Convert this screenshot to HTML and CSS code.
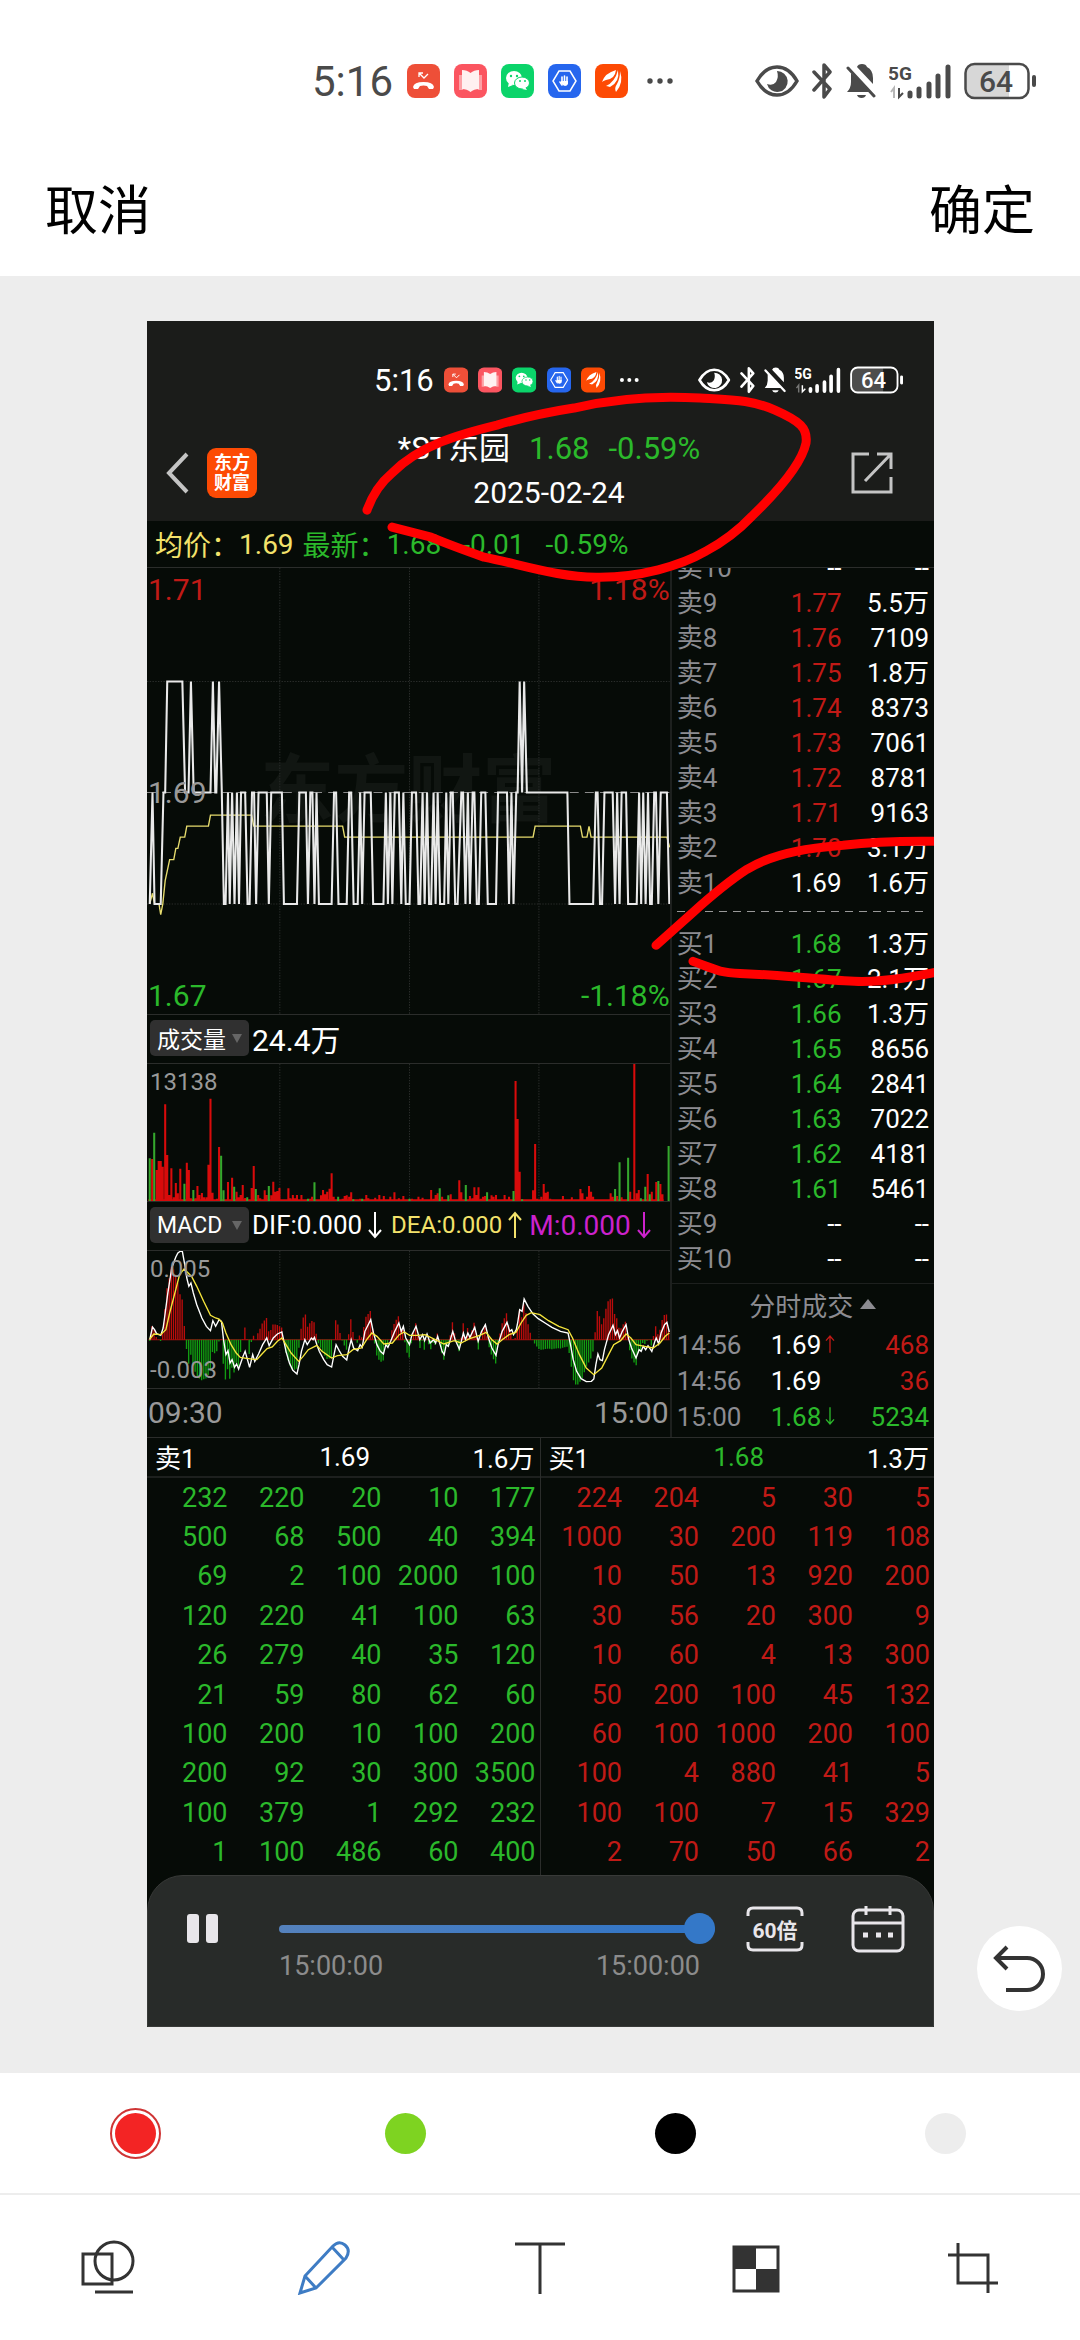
FILE: index.html
```html
<!DOCTYPE html>
<html lang="zh-CN">
<head>
  <meta charset="UTF-8">
  <meta name="viewport" content="width=device-width, initial-scale=1.0">
  <title>编辑图片</title>
  <link rel="stylesheet" href="styles.css">
</head>
<body>
  <!-- shared icons -->
  <svg class="sprite" aria-hidden="true">
    <symbol id="i-call" viewBox="0 0 33 38">
      <rect y="2" width="33" height="34" rx="8" fill="#ee4f38"/>
      <path d="M6 25q1-5 10.500-5T27 25l-1 2h-4l-2-3q-3.500-1-7 0l-2 3H7z" fill="#fff"/>
      <path d="M12 15v-4h4M12 11l5 5 4-4" fill="none" stroke="#fff" stroke-width="1.300"/>
    </symbol>
    <symbol id="i-book" viewBox="0 0 33 38">
      <rect y="2" width="33" height="34" rx="8" fill="#fb5560"/>
      <path d="M5 13h4v15H5zM24 13h4v15h-4z" fill="#fda0a5"/>
      <path d="M8 8q5 0 8.500 3Q20 8 25 8v19q-5 0-8.500 3Q13 27 8 27z" fill="#fff0f0"/>
    </symbol>
    <symbol id="i-wechat" viewBox="0 0 33 38">
      <rect y="2" width="33" height="34" rx="8" fill="#0bd46a"/>
      <ellipse cx="13" cy="16" rx="8" ry="7" fill="#fff"/>
      <path d="M8 20l-1 5 5-2z" fill="#fff"/>
      <ellipse cx="21" cy="21" rx="7.500" ry="6" fill="#fff" stroke="#0bd46a"/>
      <path d="M24 25l2 3-5-1z" fill="#fff"/>
      <g fill="#0bd46a"><circle cx="10" cy="14" r="1.200"/><circle cx="16" cy="14" r="1.200"/><circle cx="19" cy="19" r="1"/><circle cx="24" cy="19" r="1"/></g>
    </symbol>
    <symbol id="i-hand" viewBox="0 0 33 38">
      <rect y="2" width="33" height="34" rx="8" fill="#2666ee"/>
      <path d="M11 9h11l6 10-6 10H11L5 19z" fill="none" stroke="#fff" stroke-width="1.500"/>
      <path d="M14 20v-5M16.500 20v-6M19 20v-5M12 20l2 3" fill="none" stroke="#fff" stroke-width="1.600" stroke-linecap="round"/>
      <path d="M13 19h7v3q-1 2-3 2t-4-3z" fill="#fff"/>
    </symbol>
    <symbol id="i-wing" viewBox="0 0 33 38">
      <rect y="2" width="33" height="34" rx="8" fill="#fd4a04"/>
      <path d="M7 20q3-9 14-12-1 9-10 10-3 1-4 2zM11 24q9-4 12-16 2 12-8 17-3-1-4-1zM21 30q-2-4 1-8 3-5 3-13 4 12-4 21z" fill="#fff"/>
    </symbol>
    <symbol id="i-more" viewBox="0 0 28 38">
      <g fill="currentColor"><circle cx="4" cy="19" r="2.700"/><circle cx="14" cy="19" r="2.700"/><circle cx="24" cy="19" r="2.700"/></g>
    </symbol>
    <symbol id="i-eye" viewBox="0 0 44 38">
      <path d="M2 19Q10 5 22 5t20 14Q34 33 22 33T2 19z" fill="none" stroke="currentColor" stroke-width="3.500"/>
      <path d="M22 9a10.500 10.500 0 1 1-10 13q6 2 9-2 3-5 1-11z" fill="currentColor"/>
    </symbol>
    <symbol id="i-bt" viewBox="0 0 21 38">
      <path d="M2 10l16 17-6 8V3l6 7L2 28" fill="none" stroke="currentColor" stroke-width="3.500" stroke-linejoin="round" stroke-linecap="round"/>
    </symbol>
    <symbol id="i-mute" viewBox="0 0 30 38">
      <path d="M5 11l19 19H1q4-4 4-10zM11 5q1-3 5-3t5 3q6 3 6 11v6z" fill="currentColor"/>
      <path d="M2 6l26 28" stroke="currentColor" stroke-width="3" stroke-linecap="round"/>
      <path d="M11 33h9q-1 3-4.500 3T11 33z" fill="currentColor"/>
    </symbol>
    <symbol id="i-signal" viewBox="0 0 62 38">
      <text x="-1" y="18" font-family="Roboto" font-size="19" font-weight="700" fill="currentColor">5G</text>
      <path d="M21 31v3M30 27v7M40 22v12M49 14v20M59 5v29" stroke="currentColor" stroke-width="5" stroke-linecap="round"/>
      <path d="M2 30l3-4v10" fill="none" stroke="currentColor" stroke-width="2" opacity=".4"/>
      <path d="M10 26v9l4-4" fill="none" stroke="currentColor" stroke-width="2"/>
    </symbol>
    <symbol id="i-battery" viewBox="0 0 72 38">
      <path d="M10 2h35v34H10q-8 0-8-8V10q0-8 8-8z" fill="currentColor" opacity=".22"/>
      <rect x="1.500" y="2" width="63" height="34" rx="9" fill="none" stroke="currentColor" stroke-width="2.500"/>
      <path d="M70 15v8" stroke="currentColor" stroke-width="4" stroke-linecap="round"/>
      <text x="32" y="30" text-anchor="middle" font-family="Roboto" font-size="30" font-weight="500" fill="currentColor">64</text>
    </symbol>
    <symbol id="i-down" viewBox="0 0 16 30"><path d="M8 2v25M2 20l6 7 6-7" fill="none" stroke="currentColor" stroke-width="2"/></symbol>
    <symbol id="i-up" viewBox="0 0 16 30"><path d="M8 28V3M2 10l6-7 6 7" fill="none" stroke="currentColor" stroke-width="2"/></symbol>
  </svg>

  <header class="top">
    <div class="status">
      <div class="status-left">
        <span>5:16</span>
        <svg viewBox="0 0 33 38"><use href="#i-call"/></svg>
        <svg viewBox="0 0 33 38"><use href="#i-book"/></svg>
        <svg viewBox="0 0 33 38"><use href="#i-wechat"/></svg>
        <svg viewBox="0 0 33 38"><use href="#i-hand"/></svg>
        <svg viewBox="0 0 33 38"><use href="#i-wing"/></svg>
        <svg class="more" viewBox="0 0 28 38"><use href="#i-more"/></svg>
      </div>
      <div class="status-right">
        <svg viewBox="0 0 44 38"><use href="#i-eye"/></svg>
        <svg viewBox="0 0 21 38"><use href="#i-bt"/></svg>
        <svg viewBox="0 0 30 38"><use href="#i-mute"/></svg>
        <svg viewBox="0 0 62 38"><use href="#i-signal"/></svg>
        <svg viewBox="0 0 72 38"><use href="#i-battery"/></svg>
      </div>
    </div>
    <div class="actions">
      <button type="button">取消</button>
      <button type="button">确定</button>
    </div>
  </header>

  <main class="editor">
    <div class="shot">
      <div class="shot-head">
        <div class="status small">
          <div class="status-left">
            <span>5:16</span>
            <svg viewBox="0 0 33 38"><use href="#i-call"/></svg>
            <svg viewBox="0 0 33 38"><use href="#i-book"/></svg>
            <svg viewBox="0 0 33 38"><use href="#i-wechat"/></svg>
            <svg viewBox="0 0 33 38"><use href="#i-hand"/></svg>
            <svg viewBox="0 0 33 38"><use href="#i-wing"/></svg>
            <svg class="more" viewBox="0 0 28 38"><use href="#i-more"/></svg>
          </div>
          <div class="status-right">
            <svg viewBox="0 0 44 38"><use href="#i-eye"/></svg>
            <svg viewBox="0 0 21 38"><use href="#i-bt"/></svg>
            <svg viewBox="0 0 30 38"><use href="#i-mute"/></svg>
            <svg viewBox="0 0 62 38"><use href="#i-signal"/></svg>
            <svg viewBox="0 0 72 38"><use href="#i-battery"/></svg>
          </div>
        </div>
        <div class="title-bar">
          <button type="button" class="back" aria-label="返回">
            <svg width="24" height="42" viewBox="0 0 24 42"><path d="M21 2L3 21l18 19" fill="none" stroke="#c4c4c4" stroke-width="4"/></svg>
          </button>
          <div class="brand">东方<br>财富</div>
          <div class="stock">
            <div class="stock-name"><span>*ST东园</span><span class="green">1.68</span><span class="green">-0.59%</span></div>
            <div class="stock-date">2025-02-24</div>
          </div>
          <button type="button" class="share" aria-label="分享">
            <svg width="44" height="44" viewBox="0 0 44 44"><path d="M19 3H3v38h38V26M27 3h14v15M41 3L15 30" fill="none" stroke="#c4c4c4" stroke-width="3"/></svg>
          </button>
        </div>
      </div>

      <div class="summary">
        <span class="yellow">均价：</span><span class="yellow avg">1.69</span>
        <span class="green">最新：</span><span class="green now">1.68</span>
        <span class="green chg">-0.01</span><span class="green">-0.59%</span>
      </div>

      <div class="quote">
        <div class="charts">
          <div class="chart price">
            <span class="watermark">东方财富</span>
            <svg viewBox="20 20 1523 1341" preserveAspectRatio="none">
              <path class="grid" d="M407 20V1361M785 20V1361M1162 20V1361M20 361H1543M20 1030H1543"/>
              <path d="M20 695H1543" stroke="#8a8a8a" stroke-width="3" stroke-dasharray="26 18"/>
              <polyline id="avgLine" fill="none" stroke="#e6dc6e" stroke-width="4"/>
              <polyline id="priceLine" fill="none" stroke="#e9e9e9" stroke-width="6"/>
            </svg>
            <span class="tag top-left red">1.71</span>
            <span class="tag top-right red">1.18%</span>
            <span class="tag mid-left">1.69</span>
            <span class="tag bottom-left green">1.67</span>
            <span class="tag bottom-right green">-1.18%</span>
          </div>
          <div class="index-row">
            <button type="button" class="picker">成交量<i></i></button>
            <span class="total">24.4万</span>
          </div>
          <div class="chart volume">
            <svg viewBox="20 162 1523 411" preserveAspectRatio="none">
              <path class="grid" d="M407 162V573M785 162V573M1162 162V573"/>
              <path d="M24 571H1525" stroke="#d80b0b" stroke-width="6"/>
              <path id="volUp" stroke="#d80b0b" stroke-width="6"/>
              <path id="volDown" stroke="#35a82d" stroke-width="6"/>
            </svg>
            <span class="tag note-top">13138</span>
          </div>
          <div class="index-row">
            <button type="button" class="picker">MACD<i></i></button>
            <span class="dif">DIF:0.000</span><svg class="arrow" viewBox="0 0 16 30"><use href="#i-down"/></svg>
            <span class="dea">DEA:0.000</span><svg class="arrow yellow" viewBox="0 0 16 30"><use href="#i-up"/></svg>
            <span class="m">M:0.000</span><svg class="arrow purple" viewBox="0 0 16 30"><use href="#i-down"/></svg>
          </div>
          <div class="chart macd">
            <svg viewBox="20 719 1523 411" preserveAspectRatio="none">
              <path class="grid" d="M407 719V1130M785 719V1130M1162 719V1130"/>
              <path d="M24 985H1543" stroke="#a01010" stroke-width="3"/>
              <path id="macdUp" stroke="#bb0c0c" stroke-width="4"/>
              <path id="macdDown" stroke="#129c12" stroke-width="4"/>
              <polyline id="difLine" fill="none" stroke="#fff" stroke-width="4"/>
              <polyline id="deaLine" fill="none" stroke="#f5e53c" stroke-width="4"/>
            </svg>
            <span class="tag note-top">0.005</span>
            <span class="tag note-bottom">-0.003</span>
          </div>
          <div class="hours"><span>09:30</span><span>15:00</span></div>
        </div>

        <div class="book">
          <div class="ladder">
            <table>
              <tr><th>卖10</th><td>--</td><td>--</td></tr>
              <tr><th>卖9</th><td class="red">1.77</td><td>5.5万</td></tr>
              <tr><th>卖8</th><td class="red">1.76</td><td>7109</td></tr>
              <tr><th>卖7</th><td class="red">1.75</td><td>1.8万</td></tr>
              <tr><th>卖6</th><td class="red">1.74</td><td>8373</td></tr>
              <tr><th>卖5</th><td class="red">1.73</td><td>7061</td></tr>
              <tr><th>卖4</th><td class="red">1.72</td><td>8781</td></tr>
              <tr><th>卖3</th><td class="red">1.71</td><td>9163</td></tr>
              <tr><th>卖2</th><td class="red">1.70</td><td>3.1万</td></tr>
              <tr><th>卖1</th><td>1.69</td><td>1.6万</td></tr>
            </table>
            <svg class="dash" height="26" width="100%"><path d="M5 10.500H255" stroke="#999" stroke-width="1" stroke-dasharray="8 6"/></svg>
            <table class="buy">
              <tr><th>买1</th><td class="green">1.68</td><td>1.3万</td></tr>
              <tr><th>买2</th><td class="green">1.67</td><td>2.1万</td></tr>
              <tr><th>买3</th><td class="green">1.66</td><td>1.3万</td></tr>
              <tr><th>买4</th><td class="green">1.65</td><td>8656</td></tr>
              <tr><th>买5</th><td class="green">1.64</td><td>2841</td></tr>
              <tr><th>买6</th><td class="green">1.63</td><td>7022</td></tr>
              <tr><th>买7</th><td class="green">1.62</td><td>4181</td></tr>
              <tr><th>买8</th><td class="green">1.61</td><td>5461</td></tr>
              <tr><th>买9</th><td>--</td><td>--</td></tr>
              <tr><th>买10</th><td>--</td><td>--</td></tr>
            </table>
          </div>
          <div class="ticks">
            <button type="button" class="ticks-title">分时成交<i></i></button>
            <table>
              <tr><th>14:56</th><td>1.69<svg class="tick-arrow red" viewBox="0 0 16 30"><use href="#i-up"/></svg></td><td class="red">468</td></tr>
              <tr><th>14:56</th><td>1.69</td><td class="red">36</td></tr>
              <tr><th>15:00</th><td class="green">1.68<svg class="tick-arrow" viewBox="0 0 16 30"><use href="#i-down"/></svg></td><td class="green">5234</td></tr>
            </table>
          </div>
        </div>
      </div>

      <div class="queues">
        <section class="queue">
          <div class="queue-head"><span>卖1</span><span>1.69</span><span>1.6万</span></div>
          <table class="green">
            <tr><td>232</td><td>220</td><td>20</td><td>10</td><td>177</td></tr>
            <tr><td>500</td><td>68</td><td>500</td><td>40</td><td>394</td></tr>
            <tr><td>69</td><td>2</td><td>100</td><td>2000</td><td>100</td></tr>
            <tr><td>120</td><td>220</td><td>41</td><td>100</td><td>63</td></tr>
            <tr><td>26</td><td>279</td><td>40</td><td>35</td><td>120</td></tr>
            <tr><td>21</td><td>59</td><td>80</td><td>62</td><td>60</td></tr>
            <tr><td>100</td><td>200</td><td>10</td><td>100</td><td>200</td></tr>
            <tr><td>200</td><td>92</td><td>30</td><td>300</td><td>3500</td></tr>
            <tr><td>100</td><td>379</td><td>1</td><td>292</td><td>232</td></tr>
            <tr><td>1</td><td>100</td><td>486</td><td>60</td><td>400</td></tr>
          </table>
        </section>
        <section class="queue">
          <div class="queue-head"><span>买1</span><span class="green">1.68</span><span>1.3万</span></div>
          <table class="red">
            <tr><td>224</td><td>204</td><td>5</td><td>30</td><td>5</td></tr>
            <tr><td>1000</td><td>30</td><td>200</td><td>119</td><td>108</td></tr>
            <tr><td>10</td><td>50</td><td>13</td><td>920</td><td>200</td></tr>
            <tr><td>30</td><td>56</td><td>20</td><td>300</td><td>9</td></tr>
            <tr><td>10</td><td>60</td><td>4</td><td>13</td><td>300</td></tr>
            <tr><td>50</td><td>200</td><td>100</td><td>45</td><td>132</td></tr>
            <tr><td>60</td><td>100</td><td>1000</td><td>200</td><td>100</td></tr>
            <tr><td>100</td><td>4</td><td>880</td><td>41</td><td>5</td></tr>
            <tr><td>100</td><td>100</td><td>7</td><td>15</td><td>329</td></tr>
            <tr><td>2</td><td>70</td><td>50</td><td>66</td><td>2</td></tr>
          </table>
        </section>
      </div>

      <div class="player">
        <button type="button" class="pause" aria-label="暂停">
          <svg width="32" height="32" viewBox="0 0 32 32"><rect y="1" width="12" height="29" rx="3" fill="#e8e6ea"/><rect x="19" y="1" width="12" height="29" rx="3" fill="#e8e6ea"/></svg>
        </button>
        <div class="progress">
          <input type="range" min="0" max="100" value="100" aria-label="播放进度">
          <div class="times"><span>15:00:00</span><span>15:00:00</span></div>
        </div>
        <button type="button" class="speed">
          <svg width="58" height="46" viewBox="0 0 58 46"><path d="M2 10V7q0-5 5-5h44q5 0 5 5v3M2 36v3q0 5 5 5h44q5 0 5-5v-3" fill="none" stroke="#e8e6ea" stroke-width="3"/></svg>
          <span>60倍</span>
        </button>
        <button type="button" class="calendar" aria-label="日历">
          <svg width="54" height="48" viewBox="0 0 54 48"><rect x="2" y="5" width="50" height="41" rx="6" fill="none" stroke="#e8e6ea" stroke-width="3"/><path d="M2 18h50M15 1v9M39 1v9" stroke="#e8e6ea" stroke-width="3"/><path d="M12 30h5M25 30h5M37 30h5" stroke="#e8e6ea" stroke-width="5"/></svg>
        </button>
      </div>

      <!-- pen strokes drawn by the user -->
      <svg class="ink" viewBox="147 321 787 1705" preserveAspectRatio="none">
        <path d="M367 510C372 496 380 483 392 473C420 445 460 434 497 425Q535 414 574 408C620 397 665 396 700 398C735 400 752 400 775 410C800 421 808 428 806 443C802 462 782 487 752 516Q732 537 706 551C680 566 640 577 600 577C560 578 520 564 484 557Q450 545 431 537L392 527"/>
        <path d="M656 945L693 912Q724 884 747 869C778 850 820 847 843 845Q885 840 940 841"/>
        <path d="M693 961C715 969 718 972 740 973L777 975C820 978 840 981 862 981C890 981 915 976 940 971"/>
      </svg>
    </div>

    <button type="button" class="undo" aria-label="撤销">
      <svg width="54" height="48" viewBox="0 0 54 48"><path d="M14 2L3 13l11 11M3 13h31a16 16 0 0 1 0 32H13" fill="none" stroke="#333" stroke-width="4"/></svg>
    </button>
  </main>

  <footer class="tools">
    <div class="colors">
      <label class="swatch c-red"><input type="radio" name="color" aria-label="红色" checked></label>
      <label class="swatch c-green"><input type="radio" name="color" aria-label="绿色"></label>
      <label class="swatch c-black"><input type="radio" name="color" aria-label="黑色"></label>
      <label class="swatch c-gray"><input type="radio" name="color" aria-label="灰色"></label>
    </div>
    <div class="modes">
      <button type="button" aria-label="形状">
        <svg viewBox="0 0 56 56"><path d="M3 15h29v30H3z"/><circle cx="34" cy="22" r="19"/><path d="M15 53h38"/></svg>
      </button>
      <button type="button" class="active" aria-label="画笔">
        <svg viewBox="0 0 56 56"><path d="M4 54l5-17L37 7q6-6 12-1t1 13L20 49zM9 37l11 12M36 8l12 13"/></svg>
      </button>
      <button type="button" aria-label="文字">
        <svg viewBox="0 0 56 56"><path d="M3 5h50M28 5v50"/></svg>
      </button>
      <button type="button" aria-label="马赛克">
        <svg viewBox="0 0 56 56"><path d="M6 8h44v44H6z"/><path class="solid" d="M6 8h22v22H6zM28 30h22v22H28z"/></svg>
      </button>
      <button type="button" aria-label="裁剪">
        <svg viewBox="0 0 56 56"><path d="M4 16h40v38M14 4v40h40"/></svg>
      </button>
    </div>
  </footer>

  <script>
    const price = '28,1030 36,695 42,1030 60,1030 68,695 73,695 79,361 123,361 131,695 141,695 148,361 156,695 205,695 212,361 219,695 222,695 230,361 238,695 244,1030 249,1030 256,695 261,1030 268,695 275,1030 282,695 288,1030 294,695 306,695 313,1030 319,1030 326,695 332,695 338,1030 345,695 369,695 375,1030 382,695 413,695 419,1030 457,1030 464,695 483,695 489,1030 496,695 502,695 508,1030 514,695 521,1030 558,1030 565,695 571,695 578,1030 602,1030 609,695 615,695 622,1030 634,1030 641,695 647,1030 654,695 672,695 679,1030 709,1030 716,695 722,1030 729,695 735,1030 742,695 754,695 761,1030 767,695 774,1030 785,1030 792,695 804,695 811,1030 816,1030 823,695 829,1030 836,695 842,1030 848,1030 855,695 861,1030 867,695 874,1030 886,1030 892,695 898,1030 905,695 911,695 918,1030 925,1030 936,695 941,695 948,1030 955,695 961,1030 969,695 974,695 981,1030 987,1030 994,695 1006,695 1013,1030 1037,1030 1043,695 1069,695 1075,1030 1082,695 1088,1030 1096,695 1100,695 1106,361 1113,695 1119,361 1127,695 1245,695 1251,1030 1320,1030 1328,695 1333,695 1340,1030 1346,1030 1353,695 1377,695 1384,1030 1390,695 1397,1030 1403,695 1416,695 1422,1030 1447,1030 1454,695 1460,1030 1466,695 1473,1030 1480,695 1486,1030 1491,1030 1498,695 1503,695 1510,1030 1517,695 1535,695 1542,1030';
    const avg = '28,1030 36,998 42,1030 55,1030 60,1062 66,1030 73,960 86,897 98,897 104,863 110,863 117,829 130,829 136,796 199,796 205,763 325,763 331,796 590,796 596,829 1145,829 1151,796 1283,796 1289,829 1302,829 1308,797 1314,829 1535,829 1543,860';
    const volUp = '35,447 48,480 54,453 60,453 66,470 73,283 79,435 85,555 91,475 98,562 104,519 110,550 117,476 136,458 142,480 148,565 161,565 167,528 173,555 180,549 186,562 193,562 199,464 205,266 211,548 224,566 230,411 256,516 268,503 281,545 287,562 293,555 299,525 306,564 325,534 331,468 344,555 350,565 363,541 369,555 382,556 388,515 394,545 400,543 406,534 432,535 438,565 445,555 451,565 457,555 470,555 495,566 501,560 527,556 533,540 539,553 545,545 552,536 558,490 564,560 590,566 596,558 602,556 609,560 615,547 641,566 659,555 665,565 685,563 697,555 710,558 729,560 741,547 754,565 767,558 792,566 811,560 823,563 848,540 855,566 861,555 867,550 880,560 905,553 930,511 936,547 961,558 968,565 974,532 980,555 986,532 993,566 999,560 1005,558 1024,556 1030,560 1037,555 1062,555 1075,560 1094,213 1100,327 1106,485 1145,541 1151,402 1157,566 1169,560 1176,522 1182,548 1188,545 1195,566 1232,558 1258,562 1283,537 1289,550 1302,560 1308,528 1314,545 1320,560 1371,550 1377,560 1390,558 1403,562 1428,545 1440,162 1447,550 1453,540 1479,492 1491,545 1504,516 1516,522 1522,553';
    const volDown = '28,445 41,368 129,521 155,540 236,437 243,541 274,530 312,562 337,537 375,528 489,566 508,517 577,560 621,568 647,566 785,566 873,535 898,556 949,525 1011,547 1088,543 1113,568 1384,537 1397,457 1422,443 1459,565 1472,530 1485,553 1510,513 1540,408';
    const dif = '28,985 36,947 42,955 48,967 60,972 67,950 73,905 80,850 92,770 104,737 110,725 118,719 123,720 130,760 136,800 142,825 148,815 155,845 165,880 180,920 193,945 205,958 212,928 220,945 230,925 237,930 243,985 250,1030 256,1018 262,1055 268,1045 275,1068 281,1058 287,1073 300,1035 306,1020 319,1068 328,1030 334,1050 345,1028 357,1000 369,980 376,1003 388,980 400,968 413,962 419,990 425,1020 435,1055 445,1077 457,1088 463,1060 470,1020 480,985 487,1000 499,980 504,985 508,978 515,1000 522,1020 535,1045 545,1060 558,1067 565,1030 571,1000 580,1018 590,1035 602,1046 609,1010 615,985 622,1010 634,1018 641,1000 647,1008 655,960 672,925 680,965 690,1000 700,1020 709,1028 716,1000 722,1008 730,990 742,960 754,935 761,960 767,945 774,980 785,1000 792,970 804,945 815,985 823,970 829,988 836,968 845,995 855,985 861,995 867,975 880,1020 886,1030 892,1000 898,1005 911,960 918,985 930,1013 942,965 948,985 955,965 961,978 975,948 985,990 995,960 1006,940 1015,980 1025,1010 1037,1032 1043,1000 1055,960 1069,933 1077,960 1083,955 1088,970 1096,955 1100,935 1106,895 1113,900 1119,863 1130,885 1145,908 1160,922 1180,935 1200,948 1225,960 1247,965 1254,1000 1262,1045 1272,1080 1285,1102 1300,1111 1315,1110 1322,1103 1328,1060 1334,1028 1340,1045 1347,1048 1353,1015 1365,970 1378,942 1385,970 1391,958 1397,980 1405,960 1416,940 1424,985 1432,1010 1445,1040 1454,1015 1460,1020 1466,1005 1473,1015 1480,1003 1491,1020 1500,990 1504,980 1511,998 1518,965 1528,940 1535,933 1542,962';
    const dea = '28,983 40,968 60,970 75,955 86,905 100,850 115,790 128,773 140,785 150,795 165,825 185,870 205,912 220,920 230,923 240,935 250,965 265,1000 280,1025 292,1038 310,1041 340,1045 355,1028 370,1012 385,1007 400,990 413,980 425,1000 440,1025 462,1050 475,1035 490,1015 515,1002 530,1020 558,1040 575,1033 602,1030 620,1015 645,1010 660,985 675,965 690,975 710,998 735,995 755,970 770,962 785,972 810,972 830,970 860,985 885,998 915,988 935,995 960,982 990,972 1008,963 1025,985 1040,998 1055,985 1075,970 1095,963 1110,935 1125,912 1140,904 1165,910 1190,928 1220,945 1247,955 1260,980 1280,1030 1300,1070 1322,1090 1345,1070 1365,1030 1380,1000 1400,988 1416,968 1430,980 1445,1000 1470,1005 1495,1010 1515,995 1530,975 1542,965';

    function set(id, attr, value) {
      document.getElementById(id).setAttribute(attr, value);
    }

    function bars(text, base) {
      return text.split(' ').map(p => {
        const [x, y] = p.split(',');
        return `M${x} ${base}V${y}`;
      }).join('');
    }

    // value of a line at x
    function at(points, x) {
      let i = 1;
      while (i < points.length - 1 && points[i][0] < x) i++;
      const [x1, y1] = points[i - 1];
      const [x2, y2] = points[i];
      return y1 + (y2 - y1) * (x - x1) / (x2 - x1);
    }

    set('priceLine', 'points', price);
    set('avgLine', 'points', avg);
    set('volUp', 'd', bars(volUp, 573));
    set('volDown', 'd', bars(volDown, 573));
    set('difLine', 'points', dif);
    set('deaLine', 'points', dea);

    // MACD bar = 2 * (DIF - DEA)
    const zero = 985;
    const difPoints = dif.split(' ').map(p => p.split(',').map(Number));
    const deaPoints = dea.split(' ').map(p => p.split(',').map(Number));
    let up = '';
    let down = '';
    for (let i = 0; i < 241; i++) {
      const x = 28 + i * 6.3;
      const h = 2 * (at(difPoints, x) - at(deaPoints, x));
      const bar = `M${x.toFixed(1)} ${zero}V${(zero + h).toFixed(1)}`;
      if (h < 0) up += bar; else down += bar;
    }
    set('macdUp', 'd', up);
    set('macdDown', 'd', down);
  </script>
</body>
</html>
```
FILE: styles.css
```css
* {
  box-sizing: border-box;
}
body {
  margin: 0;
  background-color: #fff;
  font-family: Roboto, "Noto Sans CJK SC", sans-serif;
  color: #fff;
}
button {
  padding: 0;
  border: none;
  background: none;
  color: inherit;
  font: inherit;
  cursor: pointer;
}
svg {
  display: block;
}
table {
  width: 100%;
  border-collapse: collapse;
  table-layout: fixed;
}
th, td {
  padding: 0;
  font-weight: normal;
}
.sprite {
  display: none;
}
.red {
  color: #c01a16;
}
.green {
  color: #2bb92b;
}
.yellow {
  color: #f3e26b;
}
.purple {
  color: #cc22cc;
}

/* status bars */
.status {
  display: flex;
  justify-content: space-between;
  align-items: center;
  height: 162px;
  padding: 0 44px 0 312px;
  color: #4a4a4a;
  font-size: 42px;
}
.status-left,
.status-right {
  display: flex;
  align-items: center;
  gap: 13px;
}
.status-left {
  gap: 14px;
}
.status svg {
  height: 38px;
}
.more {
  margin-left: 4px;
}
.status.small {
  height: 118px;
  padding: 0 31px 0 227px;
  color: #fff;
  font-size: 31px;
}
.small .status-left {
  gap: 10px;
}
.small .status-right {
  gap: 9px;
}
.status.small svg {
  height: 28px;
}

.actions {
  display: flex;
  justify-content: space-between;
  height: 114px;
  padding: 0 45px 24px;
  color: #000;
  font-size: 53px;
}

.editor {
  position: relative;
  padding: 45px 146px 46px 147px;
  background-color: #ededed;
}
.shot {
  position: relative;
  overflow: hidden;
  background-color: #060b07;
}
.ink {
  position: absolute;
  top: 0;
  left: 0;
  width: 100%;
  height: 100%;
  fill: none;
  stroke: #ff0000;
  stroke-width: 9;
  stroke-linecap: round;
  stroke-linejoin: round;
  pointer-events: none;
}

.shot-head {
  height: 200px;
  background-color: #1b1c1a;
}
.title-bar {
  display: flex;
  align-items: center;
  height: 68px;
  padding: 0 40px 0 19px;
}
.brand {
  width: 50px;
  height: 50px;
  margin-left: 17px;
  padding-top: 5px;
  border-radius: 9px;
  background-color: #fd4a04;
  font-size: 18px;
  font-weight: 700;
  line-height: 20px;
  text-align: center;
}
.stock {
  flex: 1;
  padding: 0 9px 4px 0;
  text-align: center;
  font-size: 30px;
  line-height: 44px;
}
.stock-name {
  display: flex;
  justify-content: center;
  gap: 19px;
  font-size: 31px;
}

.summary {
  display: flex;
  align-items: center;
  height: 46px;
  padding-left: 8px;
  font-size: 28px;
  white-space: nowrap;
}
.avg {
  margin-right: 9px;
}
.now,
.chg {
  margin-right: 21px;
}

.quote {
  display: grid;
  grid-template-columns: 2fr 1fr;
  border-top: 1px solid #2b2d2b;
  border-bottom: 1px solid #2b2d2b;
}
.charts {
  border-right: 2px solid #1d201e;
}
.chart {
  position: relative;
  border-bottom: 1px solid #2b2d2b;
}
.chart svg {
  position: relative;
  width: 100%;
  height: 100%;
}
.price {
  height: 447px;
}
.volume,
.macd {
  height: 138px;
}
.grid {
  fill: none;
  stroke: #2a2d2b;
  stroke-width: 3;
  stroke-dasharray: 4 4;
}
.watermark {
  position: absolute;
  top: 50%;
  left: 50%;
  transform: translate(-50%, -50%);
  color: #111612;
  font-size: 74px;
  font-weight: 700;
  line-height: 86px;
  white-space: nowrap;
}
.tag {
  position: absolute;
  color: #999;
  font-size: 30px;
  line-height: 36px;
}
.tag.red {
  color: #c01a16;
}
.tag.green {
  color: #2bb92b;
}
.top-left {
  top: 4px;
  left: 1px;
}
.top-right {
  top: 4px;
  right: 0;
}
.mid-left {
  top: 207px;
  left: 1px;
}
.bottom-left {
  bottom: 0;
  left: 1px;
}
.bottom-right {
  bottom: 0;
  right: 0;
}
.note-top {
  top: 0;
  left: 3px;
  font-size: 24px;
}
.note-bottom {
  bottom: 0;
  left: 3px;
  font-size: 24px;
}

.index-row {
  display: flex;
  align-items: center;
  height: 49px;
  padding: 0 0 2px 3px;
  border-bottom: 1px solid #2b2d2b;
  white-space: nowrap;
}
.picker {
  display: flex;
  align-items: center;
  justify-content: space-between;
  width: 99px;
  height: 36px;
  padding: 0 7px;
  border-radius: 5px;
  background-color: #303030;
  font-size: 23px;
}
.picker i {
  border: 5px solid transparent;
  border-top: 9px solid #666;
  border-bottom: none;
}
.total {
  margin-left: 3px;
  font-size: 30px;
}
.dif {
  margin-left: 3px;
  font-size: 26px;
}
.dea {
  margin-left: 8px;
  color: #f3e26b;
  font-size: 24px;
}
.m {
  margin-left: 6px;
  color: #cc22cc;
  font-size: 28px;
}
.arrow {
  height: 30px;
  margin-left: 5px;
}
.chart + .index-row .arrow {
  width: 16px;
}
.hours {
  display: flex;
  justify-content: space-between;
  align-items: center;
  height: 48px;
  padding: 0 1px 2px;
  color: #999;
  font-size: 30px;
}

.book {
  display: flex;
  flex-direction: column;
  font-size: 26px;
}
.ladder {
  height: 715px;
  overflow: hidden;
}
.ladder table:first-child {
  margin-top: -17px;
}
.ladder tr {
  height: 35px;
}
.ladder td {
  width: 85px;
  line-height: 35px;
  text-align: right;
}
.ladder th,
.ticks th {
  padding-left: 5px;
  color: #8c8c91;
  line-height: 35px;
  text-align: left;
}
.ladder th {
  width: 84px;
}
.ladder td:last-child,
.ticks td:last-child {
  width: 92px;
  padding-right: 5px;
  text-align: right;
}
.ticks {
  flex: 1;
  border-top: 1px solid #1d201e;
}
.ticks-title {
  display: flex;
  align-items: center;
  justify-content: center;
  gap: 7px;
  width: 100%;
  height: 43px;
  padding: 0 0 3px 20px;
  color: #8c8c91;
}
.ticks-title i {
  border: 8px solid transparent;
  border-bottom: 10px solid #8c8c91;
  border-top: none;
}
.ticks tr {
  height: 36px;
}
.ticks th {
  width: 99px;
}
.tick-arrow {
  display: inline-block;
  width: 12px;
  height: 20px;
  margin-left: 3px;
}

.queues {
  display: grid;
  grid-template-columns: 1fr 1fr;
  height: 437px;
  font-size: 27px;
}
.queue:first-child {
  border-right: 1px solid #2b2d2b;
}
.queue-head {
  display: grid;
  grid-template-columns: 1fr auto 1fr;
  align-items: center;
  height: 40px;
  padding: 0 5px 2px 8px;
  border-bottom: 2px solid #1d201e;
  font-size: 26px;
}
.queue-head span:last-child {
  text-align: right;
}
.queue table {
  height: 394px;
}
.queue td {
  padding-right: 4px;
  text-align: right;
}
.queue td + td {
  width: 77px;
}

.player {
  display: flex;
  align-items: flex-start;
  height: 152px;
  padding: 29px 28px 0 39px;
  border: 1px solid #383a38;
  border-radius: 36px 36px 0 0;
  background-color: #282b29;
}
.player button {
  display: flex;
  align-items: center;
  height: 48px;
}
.progress {
  flex: 1;
  margin: 0 31px 0 60px;
}
.progress input {
  -webkit-appearance: none;
  appearance: none;
  display: block;
  width: 100%;
  height: 48px;
  margin: 0;
  background: none;
}
.progress input::-webkit-slider-runnable-track {
  height: 8px;
  border-radius: 4px;
  background: linear-gradient(to right, #5582bd, #2e74c8);
}
.progress input::-webkit-slider-thumb {
  -webkit-appearance: none;
  width: 31px;
  height: 31px;
  margin-top: -12px;
  border-radius: 50%;
  background-color: #3478c8;
}
.times {
  display: flex;
  justify-content: space-between;
  padding: 0 15px 0 0;
  color: #8c8c8c;
  font-size: 27px;
  line-height: 26px;
}
.speed {
  position: relative;
  margin-right: 47px;
  color: #e8e6ea;
}
.player .speed span {
  position: absolute;
  left: 0;
  width: 100%;
  text-align: center;
  font-size: 21px;
  font-weight: 700;
}

.undo {
  position: absolute;
  right: 18px;
  bottom: 62px;
  display: flex;
  align-items: center;
  justify-content: center;
  width: 85px;
  height: 85px;
  border-radius: 50%;
  background-color: #fff;
}

/* bottom tools */
.colors {
  display: grid;
  grid-template-columns: repeat(4, 1fr);
  align-items: center;
  justify-items: center;
  height: 122px;
  border-bottom: 2px solid #ededed;
}
.swatch {
  width: 53px;
  height: 53px;
}
.swatch input {
  appearance: none;
  display: block;
  width: 41px;
  height: 41px;
  margin: 6px;
  border-radius: 50%;
  background-color: currentColor;
  color: inherit;
}
.swatch input:checked {
  outline: 2px solid #cf3535;
  outline-offset: 3px;
}
.c-red {
  color: #f32424;
}
.c-green {
  color: #7ed321;
}
.c-black {
  color: #000;
}
.c-gray {
  color: #ededed;
}
.modes {
  display: grid;
  grid-template-columns: repeat(5, 1fr);
  height: 144px;
}
.modes button {
  display: flex;
  align-items: center;
  justify-content: center;
}
.modes svg {
  width: 56px;
  height: 56px;
  fill: none;
  stroke: #333;
  stroke-width: 3;
}
.modes .solid {
  fill: #333;
  stroke: none;
}
.modes .active svg {
  stroke: #3e7cc4;
}
```
